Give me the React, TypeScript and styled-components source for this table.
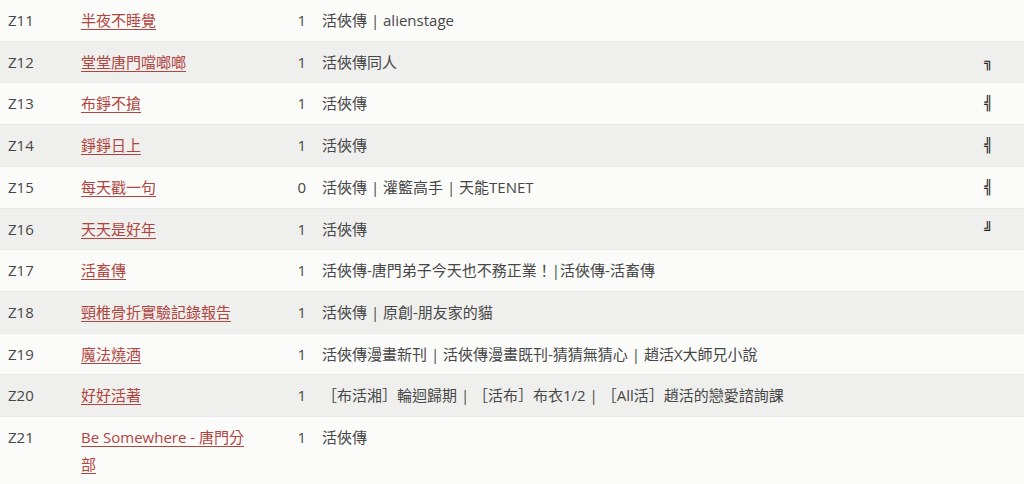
import { FC } from 'react';
import styled, { createGlobalStyle } from 'styled-components';

const GlobalStyle = createGlobalStyle`
    html, body {
        margin: 0;
        padding: 0;
        background: #fafaf9;
    }
    body {
        font-family: "Open Sans", "Noto Sans CJK TC", sans-serif;
        font-size: 15px;
        color: #474747;
    }
`;

const Table = styled.div`
    width: 1024px;
    display: flex;
    flex-direction: column;
`;

const Row = styled.div<{ $shaded: boolean }>`
    display: grid;
    grid-template-columns: 73px 181px 60px 1fr 46px;
    align-items: start;
    background: ${p => (p.$shaded ? '#efefee' : '#fbfbfa')};
    border-bottom: 1px solid #e9e9e8;
`;

const Cell = styled.div`
    padding: 7px 8px;
    line-height: 26.7px;
`;

const Code = styled(Cell)`
    color: #474747;
`;

const NameCell = styled(Cell)`
    padding-right: 8px;
`;

const Name = styled.a`
    color: #b0453f;
    text-decoration: underline;
    text-underline-offset: 3px;
    text-decoration-thickness: 1px;
    cursor: pointer;
`;

const Count = styled(Cell)`
    text-align: right;
`;

const Tags = styled(Cell)`
    white-space: nowrap;
`;

const Mark = styled(Cell)`
    padding-left: 6px;
    font-family: "DejaVu Sans Mono", monospace;
    font-size: 14px;
    color: #222;
`;

interface IEntry {
    code: string;
    name: string;
    count: number;
    tags: string;
    mark?: string;
}

const entries: IEntry[] = [
    { code: 'Z11', name: '半夜不睡覺', count: 1, tags: '活俠傳 | alienstage' },
    { code: 'Z12', name: '堂堂唐門噹啷啷', count: 1, tags: '活俠傳同人', mark: '╗' },
    { code: 'Z13', name: '布錚不搶', count: 1, tags: '活俠傳', mark: '╣' },
    { code: 'Z14', name: '錚錚日上', count: 1, tags: '活俠傳', mark: '╣' },
    { code: 'Z15', name: '每天戳一句', count: 0, tags: '活俠傳 | 灌籃高手 | 天能TENET', mark: '╣' },
    { code: 'Z16', name: '天天是好年', count: 1, tags: '活俠傳', mark: '╝' },
    { code: 'Z17', name: '活畜傳', count: 1, tags: '活俠傳-唐門弟子今天也不務正業！|活俠傳-活畜傳' },
    { code: 'Z18', name: '頸椎骨折實驗記錄報告', count: 1, tags: '活俠傳 | 原創-朋友家的貓' },
    { code: 'Z19', name: '魔法燒酒', count: 1, tags: '活俠傳漫畫新刊 | 活俠傳漫畫既刊-猜猜無猜心 | 趙活X大師兄小說' },
    { code: 'Z20', name: '好好活著', count: 1, tags: '［布活湘］輪迴歸期 | ［活布］布衣1/2 | ［All活］趙活的戀愛諮詢課' },
    { code: 'Z21', name: 'Be Somewhere - 唐門分部', count: 1, tags: '活俠傳' },
];

const App: FC = () => {
    return (
        <>
            <GlobalStyle />
            <Table>
                {entries.map((entry, i) => (
                    <Row key={entry.code} $shaded={i % 2 === 1}>
                        <Code>{entry.code}</Code>
                        <NameCell>
                            <Name>{entry.name}</Name>
                        </NameCell>
                        <Count>{entry.count}</Count>
                        <Tags>{entry.tags}</Tags>
                        <Mark>{entry.mark}</Mark>
                    </Row>
                ))}
            </Table>
        </>
    );
};

export default App;
